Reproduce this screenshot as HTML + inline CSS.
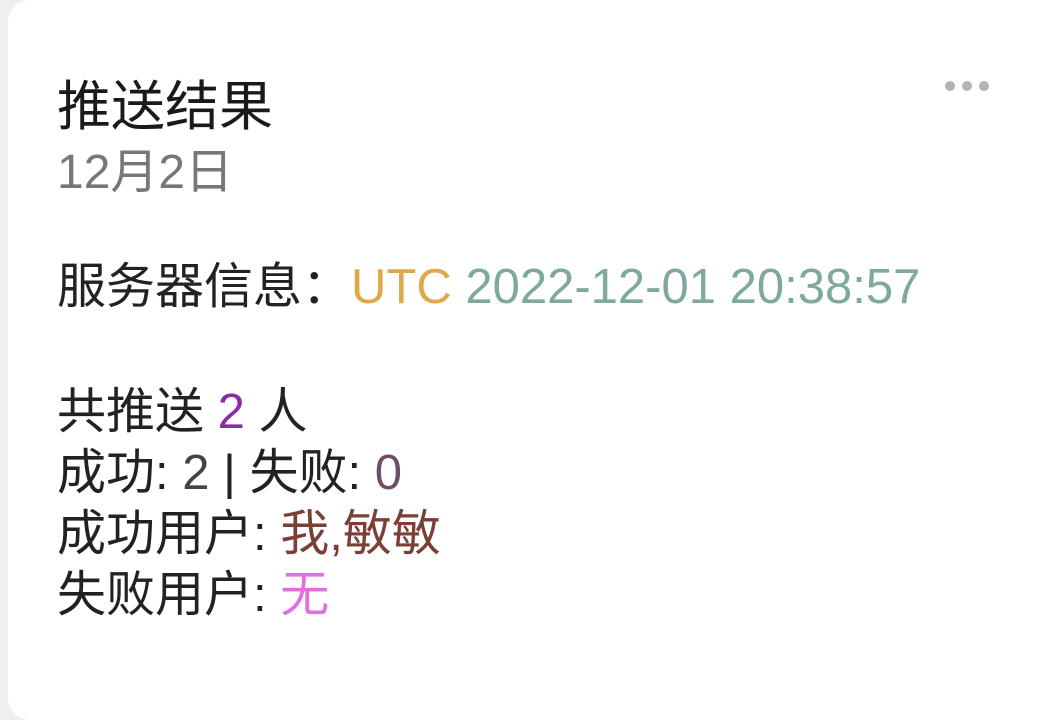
<!DOCTYPE html>
<html><head><meta charset="utf-8"><style>
html,body{margin:0;padding:0;width:1054px;height:686px;background:#efefef;overflow:hidden}
.card{position:absolute;left:8px;top:0;width:1080px;height:720px;background:#fff;border-radius:22px}
.t{position:absolute;left:57px;white-space:nowrap;font-family:"Liberation Sans","Noto Sans CJK SC",sans-serif;color:#222}
.dots{position:absolute;left:945px;top:78px}
.dots span{display:inline-block;width:10px;height:10px;border-radius:50%;background:#b3b3b3;margin-right:7px}
</style></head><body>
<div class="card"></div>
<div class="t" style="top:62px;font-size:54px;color:#1a1a1a">推送结果</div>
<div class="t" style="top:132px;font-size:48px;color:#777">12月2日</div>
<div class="dots"><span></span><span></span><span></span></div>
<div class="t" style="top:247px;font-size:49px">服务器信息：<span style="color:#dfa84a">UTC</span> <span style="color:#7fa89e">2022-12-01 20:38:57</span></div>
<div class="t" style="top:382px;font-size:49px;line-height:61px">共推送 <span style="color:#8e2aa8">2</span> 人<br>成功: <span style="color:#444">2</span> | 失败: <span style="color:#6e4e66">0</span><br>成功用户: <span style="color:#7a4036">我,敏敏</span><br>失败用户: <span style="color:#e070e0">无</span></div>
</body></html>
